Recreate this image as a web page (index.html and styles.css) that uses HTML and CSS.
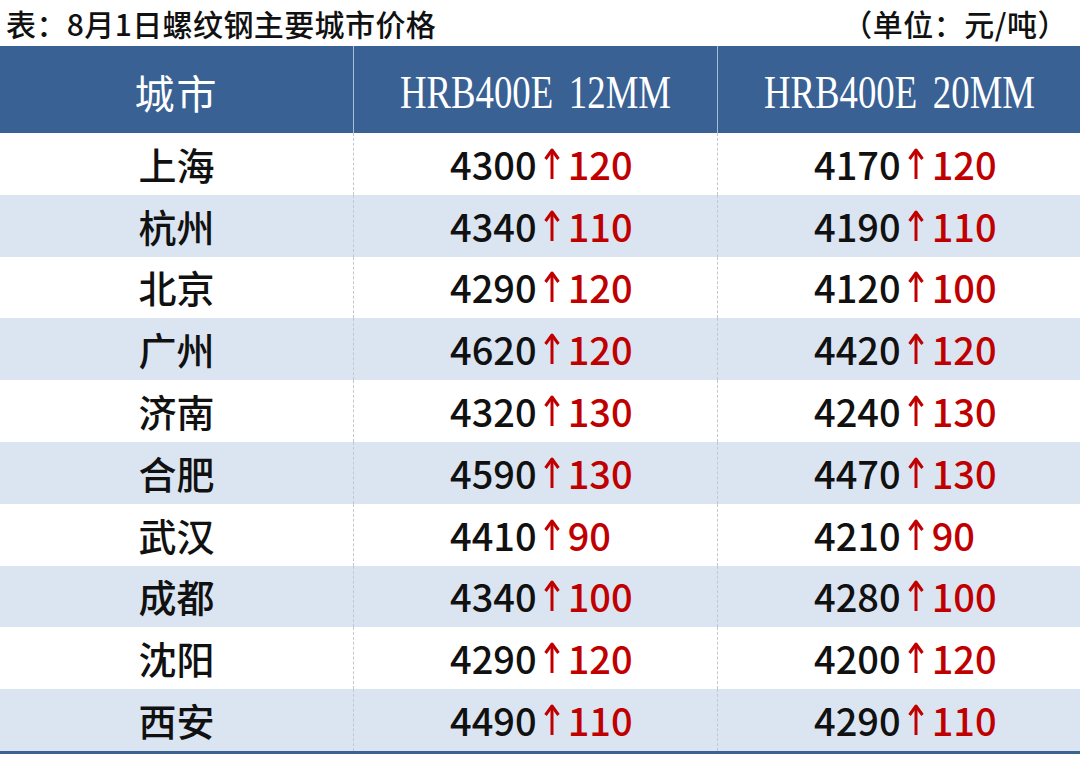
FILE: index.html
```html
<!DOCTYPE html>
<html lang="zh-CN">
<head>
<meta charset="utf-8">
<title>8月1日螺纹钢主要城市价格</title>
<link rel="stylesheet" href="styles.css">
</head>
<body>
<div class="page">
  <div class="caption">
    <span class="title">表：8月1日螺纹钢主要城市价格</span>
    <span class="unit">（单位：元/吨）</span>
  </div>
  <div class="table">
    <div class="head">
      <div class="hcell"><span class="hcn">城市</span></div>
      <div class="hcell sep"><span class="hlat">HRB400E 12MM</span></div>
      <div class="hcell sep"><span class="hlat">HRB400E 20MM</span></div>
    </div>
    <div class="body" id="rows"></div>
  </div>
</div>
<script>
const data = [
  ["上海", 4300, 120, 4170, 120],
  ["杭州", 4340, 110, 4190, 110],
  ["北京", 4290, 120, 4120, 100],
  ["广州", 4620, 120, 4420, 120],
  ["济南", 4320, 130, 4240, 130],
  ["合肥", 4590, 130, 4470, 130],
  ["武汉", 4410, 90, 4210, 90],
  ["成都", 4340, 100, 4280, 100],
  ["沈阳", 4290, 120, 4200, 120],
  ["西安", 4490, 110, 4290, 110]
];
const arrow = '<svg class="arrow" viewBox="0 0 28 32" width="28" height="32"><path d="M14 2.5 V31" /><path d="M7.5 11 L14 2 L20.5 11" /></svg>';
const rows = document.getElementById('rows');
data.forEach((d, i) => {
  const r = document.createElement('div');
  r.className = 'row' + (i % 2 ? ' alt' : '');
  r.innerHTML =
    '<div class="cell city">' + d[0] + '</div>' +
    '<div class="cell val sep"><span class="num">' + d[1] + '</span>' + arrow + '<span class="up">' + d[2] + '</span></div>' +
    '<div class="cell val sep"><span class="num">' + d[3] + '</span>' + arrow + '<span class="up">' + d[4] + '</span></div>';
  rows.appendChild(r);
});
</script>
</body>
</html>
```
FILE: styles.css
```css
html, body {
  margin: 0;
  padding: 0;
  background: #ffffff;
}
.page {
  width: 1080px;
  font-family: "Noto Sans CJK SC", "Noto Sans", sans-serif;
  color: #111111;
}
.caption {
  height: 46px;
  display: flex;
  justify-content: space-between;
  align-items: center;
  padding: 0 12px 0 6px;
  box-sizing: border-box;
  font-size: 30px;
  font-weight: 500;
  line-height: 1;
}
.title {
  letter-spacing: 0.4px;
}
.unit {
  letter-spacing: 0.5px;
}
.table {
  border-bottom: 3px solid #3d6191;
}
.head {
  display: grid;
  grid-template-columns: 353px 364px 363px;
  height: 87px;
  background: #3a6194;
}
.hcell {
  display: flex;
  align-items: center;
  justify-content: center;
  color: #ffffff;
  overflow: hidden;
  padding-top: 5px;
  box-sizing: border-box;
}
.hcell.sep {
  border-left: 1px solid #a9bdd8;
}
.hcn {
  font-family: "Noto Sans CJK SC", sans-serif;
  font-size: 40px;
  font-weight: 400;
  letter-spacing: 2px;
}
.hlat {
  display: inline-block;
  font-family: "Liberation Serif", "Noto Sans CJK SC", serif;
  font-size: 46px;
  white-space: pre;
  transform: scaleX(0.8);
  word-spacing: 8px;
}
.row {
  display: grid;
  grid-template-columns: 353px 364px 363px;
  height: 61.8px;
  background: #ffffff;
}
.row.alt {
  background: #dbe5f1;
}
.cell {
  display: flex;
  align-items: center;
  font-size: 38px;
  font-weight: 500;
  line-height: 1;
}
.cell.sep {
  border-left: 1px dashed #c4c8ce;
}
.city {
  justify-content: center;
  color: #111111;
}
.val {
  padding-left: 96px;
}
.num {
  color: #111111;
}
.up {
  color: #c00000;
}
.arrow {
  display: inline-block;
  width: 28px;
  height: 32px;
  margin: 0 2px 0 1px;
  fill: none;
  stroke: #c00000;
  stroke-width: 3;
  stroke-linejoin: round;
  stroke-linecap: butt;
  position: relative;
  top: 0px;
}
```
